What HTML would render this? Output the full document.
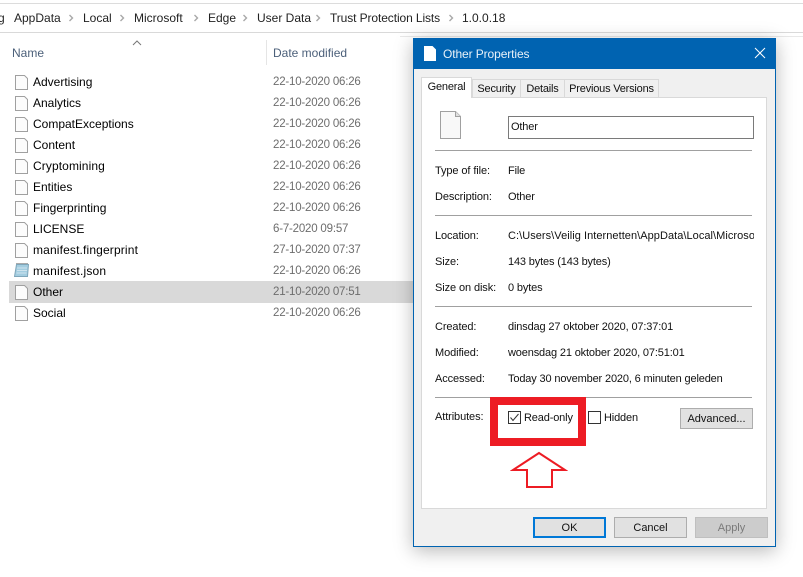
<!DOCTYPE html>
<html><head><meta charset="utf-8"><style>
html,body{margin:0;padding:0;background:#fff}
#p{position:relative;width:803px;height:577px;overflow:hidden;background:#fff;font:12px "Liberation Sans",sans-serif;color:#000}
#p div,#p svg{position:absolute}
.t{white-space:nowrap;line-height:14px}
.d{color:#6d6d6d;left:273px;white-space:nowrap;line-height:14px;font-size:11.5px;letter-spacing:-.2px}
.l{background:#a0a0a0;height:1px;left:435px;width:317px}
.k{left:435px;white-space:nowrap;line-height:14px;font-size:11px;letter-spacing:-.1px;color:#111}
.v{left:508px;white-space:nowrap;line-height:14px;font-size:11px;letter-spacing:-.15px;color:#111}
.tab{background:#f0f0f0;border:1px solid #d9d9d9;border-bottom:0;box-sizing:border-box;top:79px;height:18px;text-align:center;line-height:17px;font-size:11px;letter-spacing:-.2px;color:#111}
.b{background:#e1e1e1;border:1px solid #adadad;box-sizing:border-box;text-align:center;font-size:11px;color:#111}
</style></head><body><div id="p">
<div style="left:0;top:3px;width:803px;height:1px;background:#dcdcdc"></div>
<div style="left:0;top:32px;width:803px;height:1px;background:#d9d9d9"></div>
<div style="left:400px;top:36px;width:403px;height:1px;background:#e8e8e8"></div>
<div class="t" style="left:0;top:11px;width:5px;overflow:hidden;color:#222"><span style="margin-left:-24px">Veilig</span></div>
<div class="t" style="left:14px;top:11px;color:#222">AppData</div>
<svg style="left:68px;top:14px;overflow:visible" width="6" height="8" fill="none" stroke="#a8a8a8" stroke-width="1.4"><path d="M1.500 1L4.500 4L1.500 7"/><path transform="translate(51 0)" d="M1.500 1L4.500 4L1.500 7"/><path transform="translate(125 0)" d="M1.500 1L4.500 4L1.500 7"/><path transform="translate(174 0)" d="M1.500 1L4.500 4L1.500 7"/><path transform="translate(247 0)" d="M1.500 1L4.500 4L1.500 7"/><path transform="translate(380 0)" d="M1.500 1L4.500 4L1.500 7"/></svg>
<div class="t" style="left:83px;top:11px;color:#222">Local</div>
<div class="t" style="left:134px;top:11px;color:#222">Microsoft</div>
<div class="t" style="left:208px;top:11px;color:#222">Edge</div>
<div class="t" style="left:257px;top:11px;color:#222">User Data</div>
<div class="t" style="left:330px;top:11px;color:#222;letter-spacing:-.1px">Trust Protection Lists</div>
<div class="t" style="left:462px;top:11px;color:#222">1.0.0.18</div>

<svg style="left:132px;top:40px" width="10" height="6"><path d="M1 5L5 1L9 5" fill="none" stroke="#777"/></svg>
<div class="t" style="left:12px;top:46px;color:#4c607a">Name</div>
<div style="left:266px;top:40px;width:1px;height:25px;background:#e5e5e5"></div>
<div class="t" style="left:273px;top:46px;color:#4c607a">Date modified</div>

<div style="left:9px;top:281px;width:404px;height:22px;background:#d9d9d9"></div>

<svg style="left:15px;top:75px" width="13" height="252" fill="#fcfcfc" stroke="#a0a0a0">
<path d="M.5.5H9.500L12.500 3.500V14.500H.5Z"/><path d="M.5 21.500H9.500L12.500 24.500V35.500H.5Z"/><path d="M.5 42.500H9.500L12.500 45.500V56.500H.5Z"/><path d="M.5 63.500H9.500L12.500 66.500V77.500H.5Z"/><path d="M.5 84.500H9.500L12.500 87.500V98.500H.5Z"/><path d="M.5 105.500H9.500L12.500 108.500V119.500H.5Z"/><path d="M.5 126.500H9.500L12.500 129.500V140.500H.5Z"/><path d="M.5 147.500H9.500L12.500 150.500V161.500H.5Z"/><path d="M.5 168.500H9.500L12.500 171.500V182.500H.5Z"/><path d="M.5 210.500H9.500L12.500 213.500V224.500H.5Z"/><path d="M.5 231.500H9.500L12.500 234.500V245.500H.5Z"/>
</svg>
<svg style="left:14px;top:262px" width="16" height="16"><path d="M2.500 2.500H14.500L13.500 14.500H.5Z" fill="#a3cde0" stroke="#7fa6ba"/><path d="M3 2V1M5 2V1M7 2V1M9 2V1M11 2V1M13 2V1" stroke="#555"/><path d="M3 6H13M3 8.500H13M2.500 11H12.500" stroke="#cfe4ee"/></svg>

<div class="t" style="left:33px;top:75px">Advertising</div><div class="d" style="top:75px">22-10-2020 06:26</div>
<div class="t" style="left:33px;top:96px">Analytics</div><div class="d" style="top:96px">22-10-2020 06:26</div>
<div class="t" style="left:33px;top:117px">CompatExceptions</div><div class="d" style="top:117px">22-10-2020 06:26</div>
<div class="t" style="left:33px;top:138px">Content</div><div class="d" style="top:138px">22-10-2020 06:26</div>
<div class="t" style="left:33px;top:159px;letter-spacing:.1px">Cryptomining</div><div class="d" style="top:159px">22-10-2020 06:26</div>
<div class="t" style="left:33px;top:180px">Entities</div><div class="d" style="top:180px">22-10-2020 06:26</div>
<div class="t" style="left:33px;top:201px">Fingerprinting</div><div class="d" style="top:201px">22-10-2020 06:26</div>
<div class="t" style="left:33px;top:222px">LICENSE</div><div class="d" style="top:222px">6-7-2020 09:57</div>
<div class="t" style="left:33px;top:243px;letter-spacing:.15px">manifest.fingerprint</div><div class="d" style="top:243px">27-10-2020 07:37</div>
<div class="t" style="left:33px;top:264px;letter-spacing:.2px">manifest.json</div><div class="d" style="top:264px">22-10-2020 06:26</div>
<div class="t" style="left:33px;top:285px">Other</div><div class="d" style="top:285px">21-10-2020 07:51</div>
<div class="t" style="left:33px;top:306px">Social</div><div class="d" style="top:306px">22-10-2020 06:26</div>

<div style="left:413px;top:38px;width:363px;height:509px;box-sizing:border-box;background:#f0f0f0;border:1px solid #0063b1;box-shadow:0 4px 18px rgba(0,0,0,.28)"></div>
<div style="left:413px;top:38px;width:363px;height:31px;background:#0063b1"></div>
<svg style="left:424px;top:46px" width="13" height="15"><path d="M0 0H8.500L12 3.500V15H0Z" fill="#fff"/></svg>
<div class="t" style="left:443px;top:47px;color:#e8f1f8;font-size:12px;letter-spacing:-.1px">Other Properties</div>
<svg style="left:754px;top:47px" width="12" height="12"><path d="M1 1L11 11M11 1L1 11" stroke="#fff" stroke-width="1"/></svg>

<div style="left:421px;top:97px;width:346px;height:412px;box-sizing:border-box;background:#fff;border:1px solid #d9d9d9"></div>
<div class="tab" style="left:421px;top:77px;width:51px;height:21px;background:#fff;line-height:18px;z-index:2">General</div>
<div class="tab" style="left:472px;width:49px;line-height:18px">Security</div>
<div class="tab" style="left:520px;width:45px;line-height:18px">Details</div>
<div class="tab" style="left:564px;width:95px;line-height:18px">Previous Versions</div>
<div style="left:422px;top:96px;width:49px;height:3px;background:#fff;z-index:3"></div>

<svg style="left:440px;top:111px" width="22" height="28"><path d="M.5.5H15.500L20.500 5.500V27.500H.5Z" fill="#f8f8f8" stroke="#a0a0a0"/><path d="M15.500.5V5.500H20.500" fill="#e0e0e0" stroke="#a0a0a0"/></svg>
<div style="left:508px;top:116px;width:246px;height:23px;box-sizing:border-box;border:1px solid #7a7a7a;background:#fff"></div>
<div class="v" style="left:511px;top:120px">Other</div>

<div class="l" style="top:150px"></div>
<div class="k" style="top:164px">Type of file:</div><div class="v" style="top:164px">File</div>
<div class="k" style="top:190px">Description:</div><div class="v" style="top:190px">Other</div>
<div class="l" style="top:215px"></div>
<div class="k" style="top:229px">Location:</div>
<div class="v" style="top:229px;width:246px;overflow:hidden;letter-spacing:.05px">C:\Users\Veilig Internetten\AppData\Local\Microsoft\Edge</div>
<div class="k" style="top:255px">Size:</div><div class="v" style="top:255px">143 bytes (143 bytes)</div>
<div class="k" style="top:281px">Size on disk:</div><div class="v" style="top:281px">0 bytes</div>
<div class="l" style="top:306px"></div>
<div class="k" style="top:320px">Created:</div><div class="v" style="top:320px">dinsdag 27 oktober 2020, 07:37:01</div>
<div class="k" style="top:346px">Modified:</div><div class="v" style="top:346px">woensdag 21 oktober 2020, 07:51:01</div>
<div class="k" style="top:372px">Accessed:</div><div class="v" style="top:372px">Today 30 november 2020, 6 minuten geleden</div>
<div class="l" style="top:397px"></div>
<div class="k" style="top:410px">Attributes:</div>

<div style="left:490px;top:397px;width:96px;height:49px;box-sizing:border-box;border:8px solid #ed1c24"></div>
<svg style="left:508px;top:411px" width="14" height="14"><rect x=".5" y=".5" width="12" height="12" fill="#fff" stroke="#333"/><path d="M2.500 6.500L5 9.500L10.500 3" fill="none" stroke="#333"/></svg>
<div class="v" style="left:524px;top:411px">Read-only</div>
<div style="left:588px;top:411px;width:13px;height:13px;box-sizing:border-box;border:1px solid #333;background:#fff"></div>
<div class="v" style="left:604px;top:411px">Hidden</div>
<div class="b" style="left:680px;top:408px;width:73px;height:21px;line-height:21px">Advanced...</div>

<svg style="left:510px;top:450px" width="58" height="40"><path d="M29 3L55 20H42V37H17V20H3Z" fill="#fff" stroke="#ed1c24" stroke-width="2"/></svg>

<div class="b" style="left:533px;top:517px;width:73px;height:21px;line-height:18px;border:2px solid #0078d7">OK</div>
<div class="b" style="left:614px;top:517px;width:73px;height:21px;line-height:20px">Cancel</div>
<div class="b" style="left:695px;top:517px;width:73px;height:21px;line-height:20px;background:#ccc;border-color:#bfbfbf;color:#7a7a7a">Apply</div>
</div></body></html>
